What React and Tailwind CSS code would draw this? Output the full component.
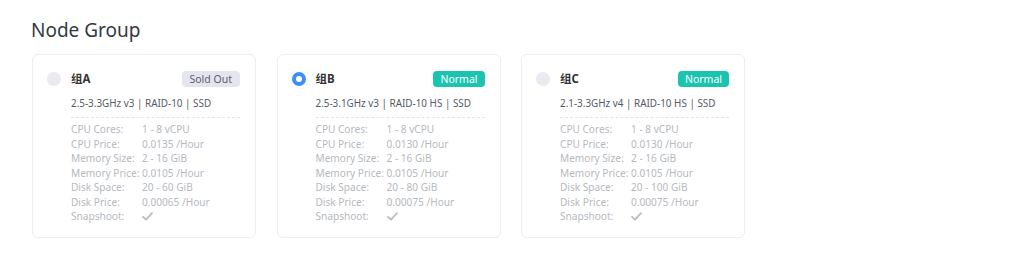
import React, { useState } from "react";

const grupos = [
  {
    id: "A",
    nombre: "组A",
    estado: "Sold Out",
    spec: "2.5-3.3GHz v3 | RAID-10 | SSD",
    filas: [
      ["CPU Cores:", "1 - 8 vCPU"],
      ["CPU Price:", "0.0135 /Hour"],
      ["Memory Size:", "2 - 16 GiB"],
      ["Memory Price:", "0.0105 /Hour"],
      ["Disk Space:", "20 - 60 GiB"],
      ["Disk Price:", "0.00065 /Hour"],
    ],
  },
  {
    id: "B",
    nombre: "组B",
    estado: "Normal",
    spec: "2.5-3.1GHz v3 | RAID-10 HS | SSD",
    filas: [
      ["CPU Cores:", "1 - 8 vCPU"],
      ["CPU Price:", "0.0130 /Hour"],
      ["Memory Size:", "2 - 16 GiB"],
      ["Memory Price:", "0.0105 /Hour"],
      ["Disk Space:", "20 - 80 GiB"],
      ["Disk Price:", "0.00075 /Hour"],
    ],
  },
  {
    id: "C",
    nombre: "组C",
    estado: "Normal",
    spec: "2.1-3.3GHz v4 | RAID-10 HS | SSD",
    filas: [
      ["CPU Cores:", "1 - 8 vCPU"],
      ["CPU Price:", "0.0130 /Hour"],
      ["Memory Size:", "2 - 16 GiB"],
      ["Memory Price:", "0.0105 /Hour"],
      ["Disk Space:", "20 - 100 GiB"],
      ["Disk Price:", "0.00075 /Hour"],
    ],
  },
];

const Check = () => (
  <svg width="11" height="9" viewBox="0 0 11 9" className="text-[#b8bcc4]">
    <path
      d="M1 4.8 L4 7.6 L10 1.2"
      fill="none"
      stroke="currentColor"
      strokeWidth="1.8"
      strokeLinecap="round"
      strokeLinejoin="round"
    />
  </svg>
);

const TarjetaGrupo = ({ grupo, activo, onSelect }) => {
  const agotado = grupo.estado === "Sold Out";
  return (
    <div
      onClick={onSelect}
      className="w-[224px] h-[184px] rounded-md border border-[#eceef2] bg-white flex gap-[10px] pl-[14px] pr-[15px] pt-[15px] cursor-pointer"
    >
      {activo ? (
        <span className="mt-[2px] w-[14px] h-[14px] rounded-full bg-[#3e8ef7] flex items-center justify-center shrink-0">
          <span className="w-[6px] h-[6px] rounded-full bg-white" />
        </span>
      ) : (
        <span className="mt-[2px] w-[14px] h-[14px] rounded-full bg-[#e9ebf0] shrink-0" />
      )}

      <div className="flex-1 flex flex-col whitespace-nowrap">
        <div className="flex items-center justify-between h-[16px] mt-[1px]">
          <p className="text-[11.5px] font-bold text-[#333]">{grupo.nombre}</p>
          <span
            className={
              agotado
                ? "px-[8px] h-[16px] leading-[16px] rounded-[4px] bg-[#e3e6ee] text-[#5a6170] text-[10.5px]"
                : "px-[7px] h-[16px] leading-[16px] rounded-[4px] bg-[#1ac4b0] text-white text-[10.5px]"
            }
          >
            {grupo.estado}
          </span>
        </div>

        <p className="mt-[8px] text-[9.9px] leading-[16px] text-[#555b66]">{grupo.spec}</p>

        <div className="mt-[6px] border-t border-dashed border-[#e3e5ea]" />

        <div className="mt-[4px] flex flex-col text-[10.1px] leading-[14.5px] text-[#b5b9c0]">
          {grupo.filas.map(([label, valor]) => (
            <div key={label} className="flex">
              <span className="w-[71px] shrink-0">{label}</span>
              <span>{valor}</span>
            </div>
          ))}
          <div className="flex items-center">
            <span className="w-[71px] shrink-0">Snapshoot:</span>
            <Check />
          </div>
        </div>
      </div>
    </div>
  );
};

const App = () => {
  const [seleccionado, setSeleccionado] = useState("B");

  return (
    <div
      className="w-[1024px] h-[267px] bg-white px-[32px] pt-[16px]"
      style={{ fontFamily: '"Noto Sans", "Noto Sans CJK SC", sans-serif' }}
    >
      <h2 className="text-[19px] leading-[28px] text-[#333a45] -ml-[1px]">Node Group</h2>

      <div className="mt-[10px] flex gap-[20.5px]">
        {grupos.map((g) => (
          <TarjetaGrupo
            key={g.id}
            grupo={g}
            activo={seleccionado === g.id}
            onSelect={() => setSeleccionado(g.id)}
          />
        ))}
      </div>
    </div>
  );
};

export default App;
